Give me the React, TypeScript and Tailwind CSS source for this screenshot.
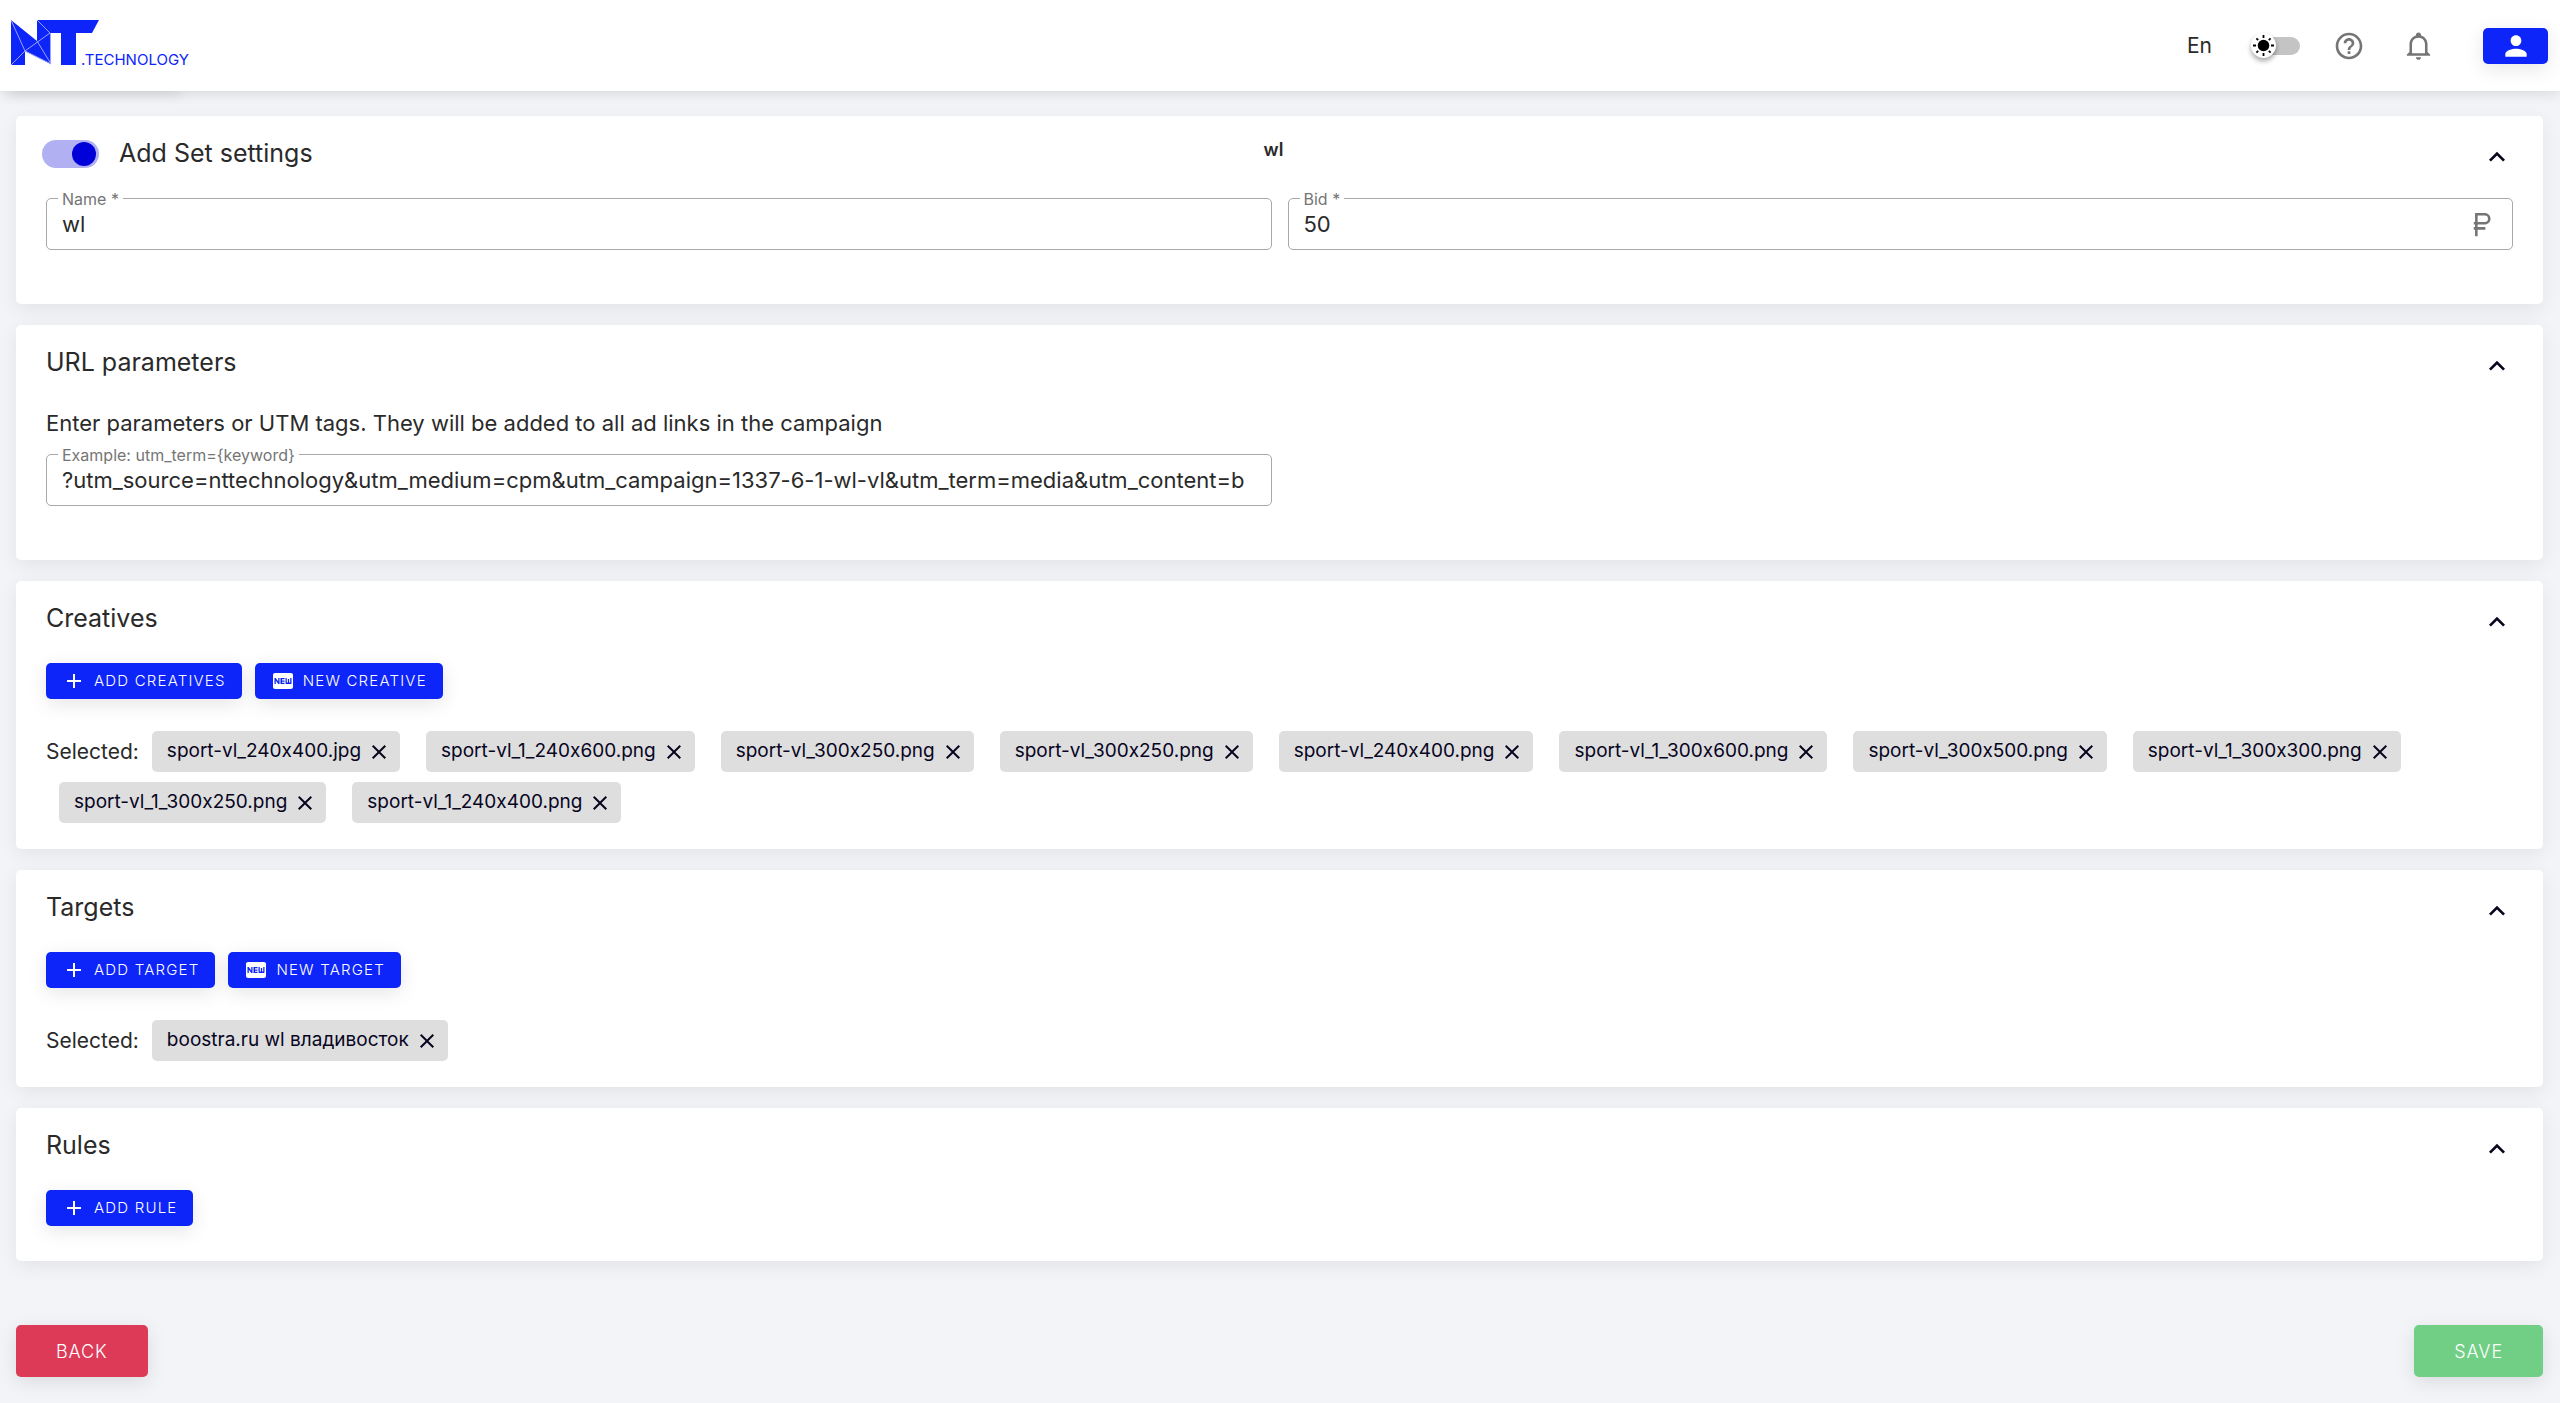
import { ReactNode } from 'react'
import { MdAdd, MdClose, MdExpandLess, MdFiberNew, MdHelpOutline, MdPerson } from 'react-icons/md'

const creatives = [
  'sport-vl_240x400.jpg',
  'sport-vl_1_240x600.png',
  'sport-vl_300x250.png',
  'sport-vl_300x250.png',
  'sport-vl_240x400.png',
  'sport-vl_1_300x600.png',
  'sport-vl_300x500.png',
  'sport-vl_1_300x300.png',
  'sport-vl_1_300x250.png',
  'sport-vl_1_240x400.png',
]

const targets = ['boostra.ru wl владивосток']

const Logo = () => {
  return (
    <a href="#" aria-label="NT technology" className="flex h-[91px] w-[190px] items-center pb-[5px] pl-[11px] shadow-[0_14px_12px_-10px_rgba(0,0,0,0.08)]">
      <svg width="182" height="46" viewBox="0 0 182 46" className="shrink-0 overflow-visible">
        <g fill="#0d25f8">
          <path d="M0 0 L26 21 V0 H88 L81 13 H65 V45 H50 V13 H40 V44 L14 31 V45 H0 Z" />
        </g>
        <path d="M0 0 L14 31 L40 44 M0 45 L14 31 L39 13 L26 0 M26 21 L40 44 M39.500 13 V44" fill="none" stroke="#9aa4ff" strokeWidth="1" />
        <text x="70" y="45" fontSize="15" fontFamily="Inter, sans-serif" fontWeight="400" fill="#0d25f8">.TECHNOLOGY</text>
      </svg>
    </a>
  )
}

const BellIcon = () => {
  return (
    <svg width="31" height="31" viewBox="0 0 24 24" fill="currentColor">
      <path d="M10 21H14C14 22.1 13.1 23 12 23S10 22.1 10 21M21 19V20H3V19L5 17V11C5 7.9 7 5.2 10 4.3V4C10 2.9 10.9 2 12 2S14 2.9 14 4V4.3C17 5.2 19 7.9 19 11V17L21 19M17 11C17 8.2 14.8 6 12 6S7 8.2 7 11V18H17V11Z" />
    </svg>
  )
}

const RubleIcon = () => {
  return (
    <svg width="31" height="31" viewBox="0 0 24 24" fill="currentColor" className="shrink-0 text-[#757575]">
      <path d="M6 10H7V3H14.500C17 3 19 5 19 7.500S17 12 14.500 12H9V14H15V16H9V21H7V16H6V14H7V12H6V10M14.500 5H9V10H14.500A2.500 2.500 0 0 0 17 7.500A2.500 2.500 0 0 0 14.500 5Z" />
    </svg>
  )
}

const SunIcon = () => {
  return (
    <svg width="25" height="25" viewBox="0 0 25 25" className="pointer-events-none absolute left-0 top-0">
      <circle cx="12.500" cy="12.500" r="5.800" />
      <g stroke="#000" strokeWidth="1.800">
        <path d="M12.500 2v3M12.500 20v3M2 12.500h3M20 12.500h3M5.400 5.400l1.800 1.800M17.800 17.800l1.800 1.800M5.400 19.600l1.800-1.800M17.800 7.200l1.800-1.800" />
      </g>
    </svg>
  )
}

const Header = () => {
  return (
    <header className="relative z-10 flex h-[91px] items-center justify-between bg-white pr-3 shadow-[0_2px_14px_rgba(0,0,0,0.12)]">
      <Logo />
      <div className="flex items-center">
        <button type="button" className="text-[21px]">En</button>
        <label className="relative ml-[39px] flex h-[25px] w-[49px] items-center justify-end">
          <input type="checkbox" aria-label="Dark theme" className="h-[18px] w-[38px] appearance-none rounded-full bg-[#c4c4c4] before:absolute before:left-0 before:top-0 before:size-[25px] before:rounded-full before:bg-white before:shadow-[0_3px_5px_rgba(0,0,0,0.35)]" />
          <SunIcon />
        </label>
        <button type="button" aria-label="Help" className="ml-[33px] text-[#757575]"><MdHelpOutline size={32} /></button>
        <button type="button" aria-label="Notifications" className="ml-[38px] text-[#757575]"><BellIcon /></button>
        <button type="button" aria-label="Account" className="ml-[49px] flex h-9 w-[65px] items-center justify-center rounded-[5px] bg-[#0d25f8] text-white shadow-[0_5px_19px_rgba(0,0,0,0.1)]">
          <MdPerson size={32} />
        </button>
      </div>
    </header>
  )
}

type CardProps = {
  title: string
  before?: ReactNode
  note?: string
  className: string
  children: ReactNode
}

const Card = ({ title, before, note, className, children }: CardProps) => {
  return (
    <section className={`rounded-[5px] bg-white px-[30px] pt-[14px] shadow-[0_5px_19px_rgba(0,0,0,0.07)] ${className}`}>
      <div className="mb-5 grid h-12 grid-cols-[1fr_auto_1fr] items-center">
        <div className="flex items-center gap-5">
          {before}
          <h2 className="text-[25px]">{title}</h2>
        </div>
        <span className="pb-2.5 pr-3 text-[18px] font-semibold">{note}</span>
        <button type="button" aria-label={`Collapse ${title}`} className="mt-1.5 justify-self-end text-[#08051f]">
          <MdExpandLess size={32} />
        </button>
      </div>
      {children}
    </section>
  )
}

type FieldProps = {
  id: string
  label: string
  value: string
  icon?: ReactNode
}

const Field = ({ id, label, value, icon }: FieldProps) => {
  return (
    <div className="relative flex h-[52px] items-center rounded-[5px] border border-[#a8a8a8] px-[15px]">
      <label htmlFor={id} className="absolute -top-[10px] left-[11px] bg-white px-1 text-[16px] leading-5 text-[#757575]">{label}</label>
      <input id={id} defaultValue={value} className="h-8 min-w-0 grow bg-transparent text-[22px] outline-none" />
      {icon}
    </div>
  )
}

const ActionButton = ({ icon, children }: { icon: ReactNode, children: ReactNode }) => {
  return (
    <button type="button" className="flex h-9 items-center gap-2 rounded-[5px] bg-[#0d25f8] pl-4 pr-4 text-[15px] font-light tracking-[0.08em] text-white uppercase shadow-[0_5px_19px_rgba(0,0,0,0.1)]">
      {icon}
      {children}
    </button>
  )
}

const Selected = ({ items }: { items: string[] }) => {
  return (
    <div className="mt-8 flex flex-wrap items-center gap-y-[10px]">
      <span className="text-[21px]">Selected:</span>
      {items.map((item, i) => (
        <span key={i} className="mx-[13px] flex h-[41px] items-center gap-1.5 rounded-[5px] bg-[#dedede] pl-[15px] pr-[9px] text-[19px] text-[#08051f]">
          {item}
          <button type="button" aria-label={`Remove ${item}`}><MdClose size={24} /></button>
        </span>
      ))}
    </div>
  )
}

const App = () => {
  return (
    <div className="min-h-screen bg-[#f2f4f8] font-['Inter',sans-serif] text-[#2a2a2a] [font-feature-settings:'calt'_0]">
      <Header />
      <main className="flex flex-col gap-[21px] pb-6 pl-4 pr-[17px] pt-[25px]">
        <Card
          title="Add Set settings"
          note="wl"
          className="pb-[54px]"
          before={
            <input
              type="checkbox"
              defaultChecked
              aria-label="Add Set settings"
              className="relative -ml-1 h-7 w-[57px] appearance-none rounded-full bg-[#b0b0f3] before:absolute before:right-[3px] before:top-[2px] before:size-6 before:rounded-full before:bg-[#0000d8]"
            />
          }
        >
          <div className="grid grid-cols-2 gap-4">
            <Field id="name" label="Name *" value="wl" />
            <Field id="bid" label="Bid *" value="50" icon={<RubleIcon />} />
          </div>
        </Card>

        <Card title="URL parameters" className="pb-[54px]">
          <p className="mb-[15px] text-[22px] leading-8">Enter parameters or UTM tags. They will be added to all ad links in the campaign</p>
          <div className="grid grid-cols-2 gap-4">
            <Field
              id="utm"
              label="Example: utm_term={keyword}"
              value="?utm_source=nttechnology&utm_medium=cpm&utm_campaign=1337-6-1-wl-vl&utm_term=media&utm_content=b"
            />
          </div>
        </Card>

        <Card title="Creatives" className="pb-[26px]">
          <div className="flex gap-[13px]">
            <ActionButton icon={<MdAdd size={24} />}>Add creatives</ActionButton>
            <ActionButton icon={<MdFiberNew size={24} />}>New creative</ActionButton>
          </div>
          <Selected items={creatives} />
        </Card>

        <Card title="Targets" className="pb-[26px]">
          <div className="flex gap-[13px]">
            <ActionButton icon={<MdAdd size={24} />}>Add target</ActionButton>
            <ActionButton icon={<MdFiberNew size={24} />}>New target</ActionButton>
          </div>
          <Selected items={targets} />
        </Card>

        <Card title="Rules" className="pb-[35px]">
          <div className="flex">
            <ActionButton icon={<MdAdd size={24} />}>Add rule</ActionButton>
          </div>
        </Card>

        <div className="mt-[43px] flex justify-between">
          <button type="button" className="h-[52px] rounded-[5px] bg-[#dc3a57] px-10 text-[18px] font-light tracking-wider text-white shadow-[0_5px_19px_rgba(0,0,0,0.1)]">BACK</button>
          <button type="button" className="h-[52px] rounded-[5px] bg-[#71ce85] px-10 text-[18px] font-light tracking-wider text-white shadow-[0_5px_19px_rgba(0,0,0,0.1)]">SAVE</button>
        </div>
      </main>
    </div>
  )
}

export default App
